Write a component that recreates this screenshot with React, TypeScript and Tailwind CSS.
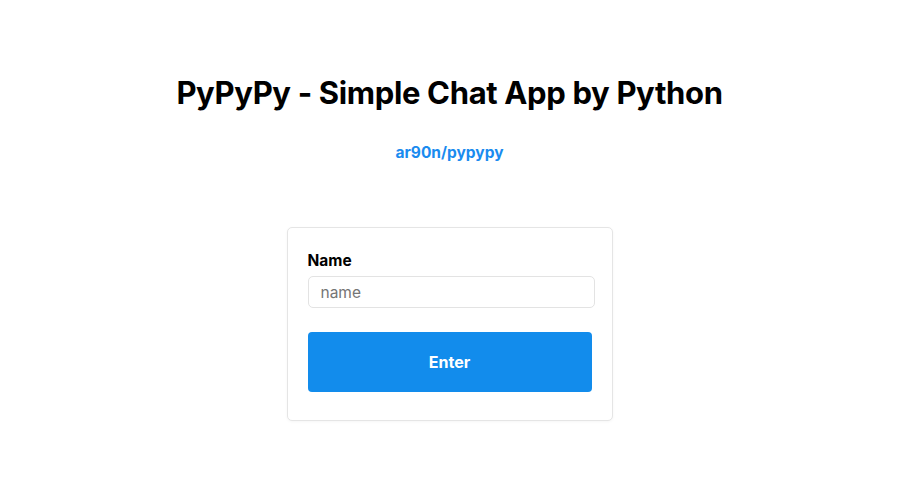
export default function App() {
  return (
    <div className="min-h-screen bg-white font-['Inter',sans-serif] text-black">
      <header className="flex flex-col items-center pt-[74px]">
        <h1 className="text-[31px] font-bold leading-[38px] tracking-[-0.35px]">
          PyPyPy - Simple Chat App by Python
        </h1>
        <a href="#" className="mt-[29px] text-[15.5px] font-bold text-[#1a8bef]">
          ar90n/pypypy
        </a>
      </header>

      <main className="flex justify-center pt-[63px]">
        <div className="w-[326px] rounded-[5px] border border-[#e5e5e5] bg-white px-5 pt-6 pb-7 shadow-[0_1px_3px_rgba(0,0,0,0.04)]">
          <label className="block text-[15.5px] font-bold leading-[18px]">Name</label>
          <input
            placeholder="name"
            className="mt-[6px] block h-[32px] w-[287px] rounded-[5px] border border-[#e3e3e3] px-3 text-[15.5px] placeholder:text-[#757575] outline-none"
          />
          <button className="mt-6 h-[60px] w-full rounded-[4px] bg-[#128cec] text-[16px] font-bold text-white">
            Enter
          </button>
        </div>
      </main>
    </div>
  )
}
